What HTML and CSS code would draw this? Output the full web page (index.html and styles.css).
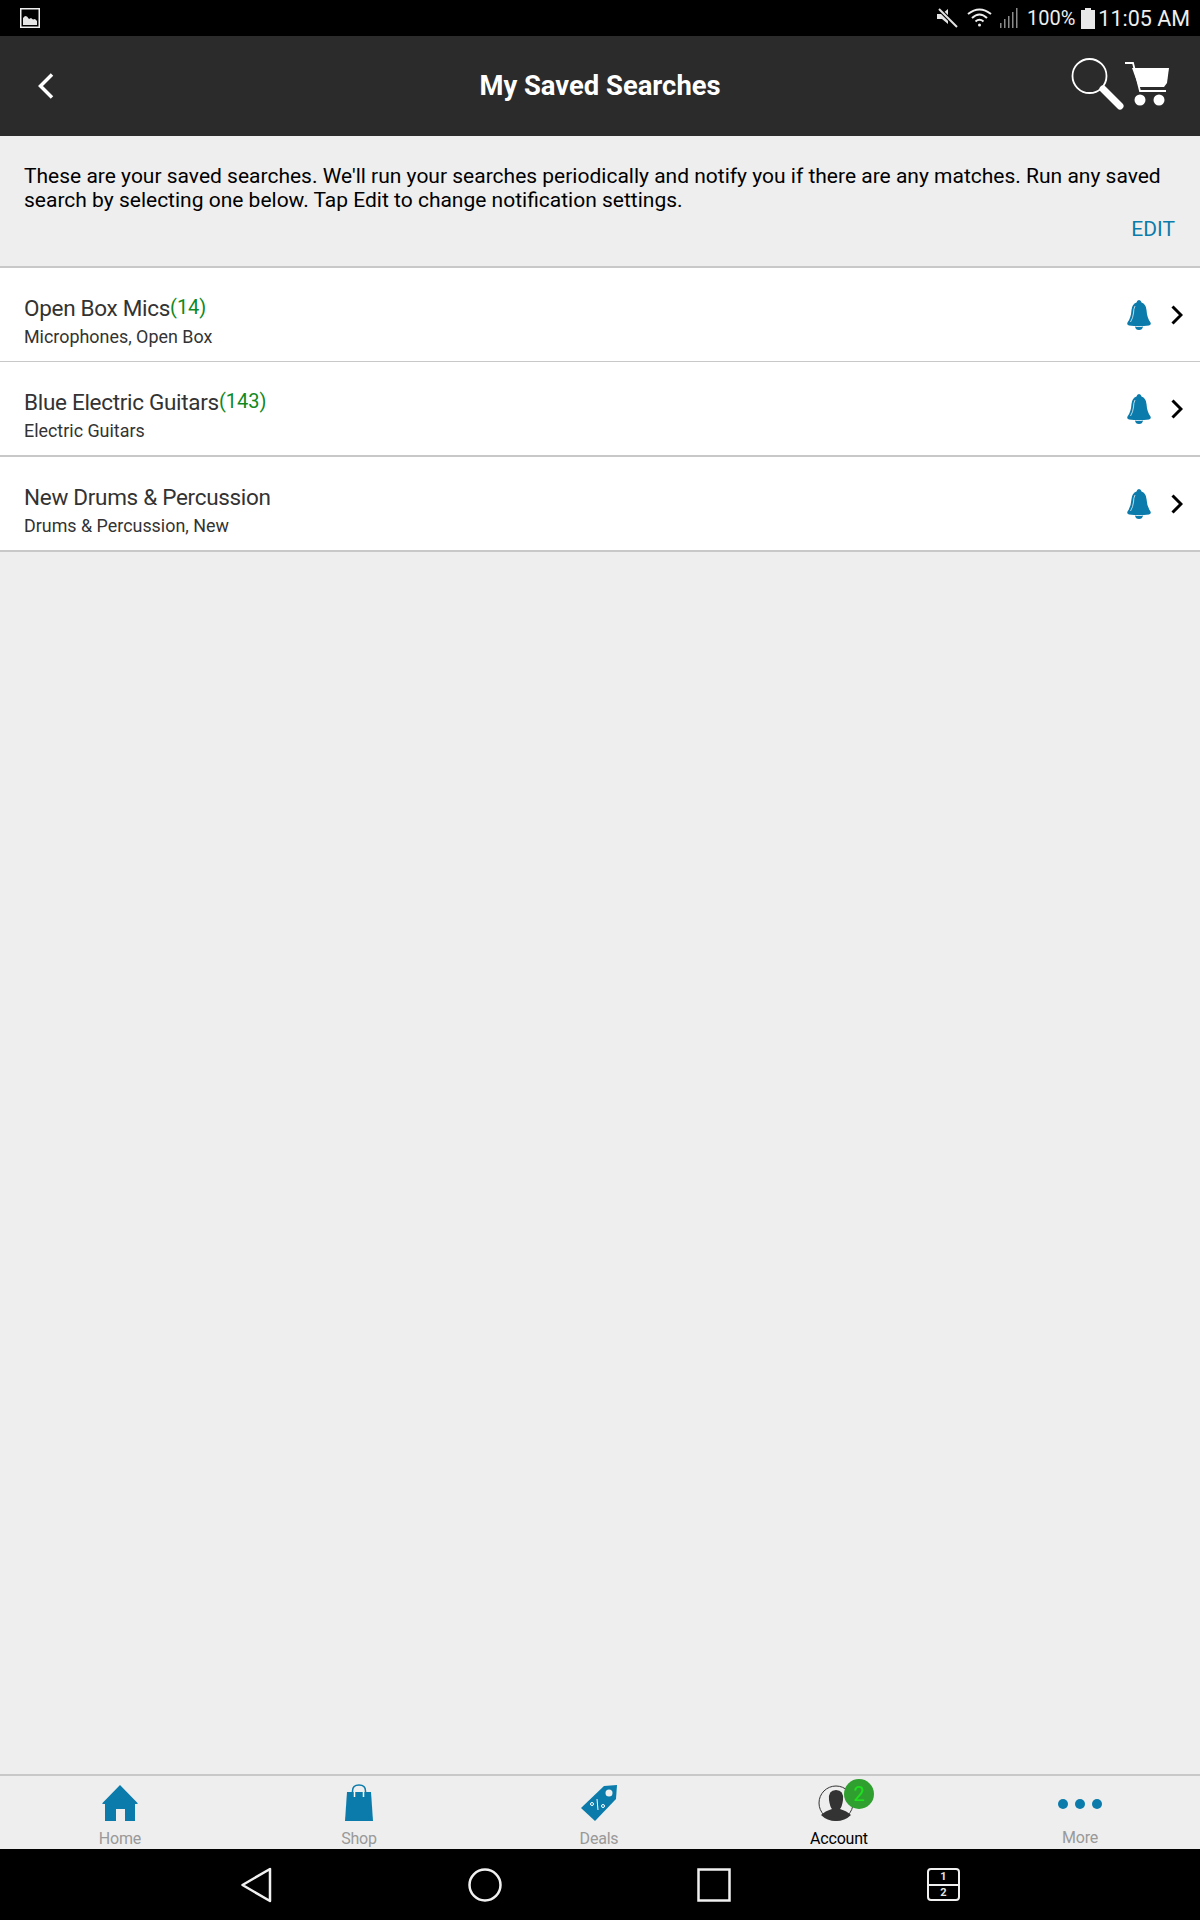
FILE: index.html
```html
<!DOCTYPE html>
<html lang="en">
<head>
  <meta charset="UTF-8" />
  <title>My Saved Searches</title>
  <link rel="stylesheet" href="styles.css">
</head>
<body>
  <div class="screen">
    <div class="status-bar">
      <svg class="status-photo" width="20" height="20" viewBox="0 0 20 20">
        <rect x="0.75" y="0.75" width="18.5" height="18.5" fill="none" stroke="#eee" stroke-width="1.5"/>
        <path d="M3 17V10L5 8L7 8.5L9 11L11 10L13 11.5L15 11L17 13V17Z" fill="#e4e4e4"/>
      </svg>
      <div class="status-right">
        <svg width="22" height="20" viewBox="0 0 22 20">
          <path d="M1 6H6L12 1V16L6 11H1Z" fill="#e4e4e4"/>
          <path d="M3 1L20 18" stroke="#000" stroke-width="4"/>
          <path d="M3 1L21 19" stroke="#e4e4e4" stroke-width="2"/>
        </svg>
        <svg class="status-wifi" width="25" height="20" viewBox="0 0 25 20" fill="none" stroke="#eee" stroke-width="2">
          <path d="M1 6Q12.5 -3 24 6"/>
          <path d="M5 10Q12.5 3 20 10"/>
          <path d="M8.500 13.500Q12.500 10 16.500 13.500"/>
          <circle cx="12.500" cy="17" r="1.500" fill="#eee" stroke="none"/>
        </svg>
        <svg class="status-signal" width="18" height="22" viewBox="0 0 18 22" fill="#8a8a8a">
          <rect x="0" y="16" width="1.500" height="5"/>
          <rect x="4" y="12" width="1.500" height="9"/>
          <rect x="8" y="9" width="1.500" height="12"/>
          <rect x="12" y="5" width="1.500" height="16"/>
          <rect x="16" y="1" width="1.500" height="20"/>
        </svg>
        <span class="status-pct">100%</span>
        <svg class="status-batt" width="14" height="21" viewBox="0 0 14 21">
          <path d="M4 0H10V2H14V21H0V2H4Z" fill="#e8e8e8"/>
        </svg>
        <span class="status-time">11:05 AM</span>
      </div>
    </div>

    <header class="app-bar">
      <svg class="back-icon" width="20" height="28" viewBox="0 0 20 28" fill="none" stroke="#fff" stroke-width="3.500">
        <path d="M16 2.500L4.500 14L16 25.500"/>
      </svg>
      <h1>My Saved Searches</h1>
      <div class="app-actions">
        <svg class="search-icon" width="54" height="54" viewBox="0 0 54 54" fill="none" stroke="#fff">
          <circle cx="18.500" cy="19" r="17" stroke-width="1.800"/>
          <path d="M32 32L49 49" stroke-width="7" stroke-linecap="round"/>
        </svg>
        <svg width="46" height="46" viewBox="0 0 46 46" fill="#fff">
          <path d="M1 2H9L16 30H42" fill="none" stroke="#fff" stroke-width="1.800"/>
          <path d="M8 7H45L43 22L40 26H15Z"/>
          <circle cx="16" cy="39" r="5.500"/>
          <circle cx="35" cy="39" r="5.500"/>
        </svg>
      </div>
    </header>

    <section class="intro">
      <p>These are your saved searches. We'll run your searches periodically and notify you if there are any matches. Run any saved search by selecting one below. Tap Edit to change notification settings.</p>
      <a class="edit-link">EDIT</a>
    </section>

    <ul class="search-list">
      <li class="search-row thin">
        <div class="search-text">
          <div class="search-name">Open Box Mics<span class="search-count">(14)</span></div>
          <div class="search-tags">Microphones, Open Box</div>
        </div>
        <svg class="bell" width="24" height="30" viewBox="0 0 24 30"><use href="#bell-shape"/></svg>
        <svg class="chevron" width="12" height="20" viewBox="0 0 12 20" fill="none" stroke="#000" stroke-width="3"><path d="M1.500 1.500L10 10L1.500 18.500"/></svg>
      </li>
      <li class="search-row">
        <div class="search-text">
          <div class="search-name">Blue Electric Guitars<span class="search-count">(143)</span></div>
          <div class="search-tags">Electric Guitars</div>
        </div>
        <svg class="bell" width="24" height="30" viewBox="0 0 24 30"><use href="#bell-shape"/></svg>
        <svg class="chevron" width="12" height="20" viewBox="0 0 12 20" fill="none" stroke="#000" stroke-width="3"><path d="M1.500 1.500L10 10L1.500 18.500"/></svg>
      </li>
      <li class="search-row">
        <div class="search-text">
          <div class="search-name">New Drums &amp; Percussion</div>
          <div class="search-tags">Drums &amp; Percussion, New</div>
        </div>
        <svg class="bell" width="24" height="30" viewBox="0 0 24 30"><use href="#bell-shape"/></svg>
        <svg class="chevron" width="12" height="20" viewBox="0 0 12 20" fill="none" stroke="#000" stroke-width="3"><path d="M1.500 1.500L10 10L1.500 18.500"/></svg>
      </li>
    </ul>

    <div class="spacer"></div>

    <nav class="tab-bar">
      <div class="tab">
        <svg width="38" height="38" viewBox="0 0 38 38" fill="#0a7bab">
          <path d="M19 1L37 19.500L35.500 20H34V37H24V25H15V37H4V20H2.500L1 19.500Z"/>
        </svg>
        <span>Home</span>
      </div>
      <div class="tab nudge">
        <svg width="28" height="38" viewBox="0 0 28 38">
          <path d="M2 8H26L28 37H0Z" fill="#0a7bab"/>
          <path d="M7.500 13V7Q7.500 1 14 1Q20.500 1 20.500 7V13" fill="none" stroke="#0a7bab" stroke-width="1.500"/>
          <path d="M9.500 13V8M18.500 13V8" stroke="#fff" stroke-width="1.500"/>
        </svg>
        <span>Shop</span>
      </div>
      <div class="tab nudge">
        <svg width="38" height="38" viewBox="0 0 38 38">
          <path d="M1 24L24 2L37 1L36 15L15 37Z" fill="#0a7bab"/>
          <circle cx="29" cy="9" r="3.500" fill="#eee"/>
          <path d="M17 15L18 26" stroke="#fff" stroke-width="1"/>
          <circle cx="12" cy="20" r="1.500" fill="none" stroke="#fff"/>
          <circle cx="23" cy="22" r="1.500" fill="none" stroke="#fff"/>
        </svg>
        <span>Deals</span>
      </div>
      <div class="tab nudge active">
        <div class="avatar">
          <svg width="36" height="38" viewBox="0 0 36 38">
            <circle cx="18" cy="19" r="17" fill="#eee" stroke="#333" stroke-width="1"/>
            <path d="M18 6Q26 6 25 16Q24 23 22 25Q29 27 33 31Q27 37 18 37Q9 37 3 31Q7 27 14 25Q12 23 11 16Q10 6 18 6Z" fill="#333"/>
          </svg>
          <span class="avatar-badge">2</span>
        </div>
        <span>Account</span>
      </div>
      <div class="tab more">
        <div class="more-dots"><i></i><i></i><i></i></div>
        <span>More</span>
      </div>
    </nav>

    <div class="nav-bar">
      <svg width="36" height="36" viewBox="0 0 36 36" fill="none" stroke="#f0f0f0" stroke-width="2.500">
        <path d="M4.500 18L32 2V34Z" stroke-linejoin="round"/>
      </svg>
      <svg width="36" height="36" viewBox="0 0 36 36" fill="none" stroke="#f0f0f0" stroke-width="2.500">
        <circle cx="18" cy="18" r="15.500"/>
      </svg>
      <svg width="36" height="36" viewBox="0 0 36 36" fill="none" stroke="#f0f0f0" stroke-width="2.500">
        <rect x="2.500" y="2.500" width="31" height="31"/>
      </svg>
      <div class="split-btn"><span>1</span><span>2</span></div>
    </div>
  </div>

  <svg class="defs" width="0" height="0">
    <symbol id="bell-shape" viewBox="0 0 24 30">
      <path d="M12 0Q14 0 14.500 2.500Q19 4 19.500 10Q20 18 23.500 22.500Q24.500 25 22 25.500Q12 27 2 25.500Q-0.500 25 0.500 22.500Q4 18 4.500 10Q5 4 9.500 2.500Q10 0 12 0Z" fill="#0a7bab"/>
      <path d="M8 26.500Q12 27.500 16 26.500Q15.500 30 12 30Q8.500 30 8 26.500Z" fill="#0a7bab"/>
      <path d="M8 6Q6.500 9 6.500 13Q6 18 3.500 22" fill="none" stroke="#eaf4f8" stroke-width="0.800"/>
    </symbol>
  </svg>
</body>
</html>
```

FILE: styles.css
```css
* { box-sizing:border-box; margin:0; padding:0; }
body {
  font-family:Roboto,"Liberation Sans",sans-serif;
  background:#eee;
}
.screen {
  width:1200px; height:1920px;
  display:flex; flex-direction:column;
}
.defs { position:absolute; }

/* status bar */
.status-bar {
  height:36px; flex:none;
  background:#000; color:#eee;
  display:flex; align-items:center;
  justify-content:space-between;
  padding:0 10px 0 20px;
}
.status-right { display:flex; align-items:center; }
.status-wifi { margin-left:9px; }
.status-signal { margin-left:8px; }
.status-pct { font-size:20px; margin-left:9px; }
.status-batt { margin-left:6px; }
.status-time { font-size:21.5px; margin-left:3px; }

/* app bar */
.app-bar {
  height:100px; flex:none;
  background:#2b2b2b; color:#fff;
  display:flex; align-items:center;
  position:relative;
  padding:0 30px 0 36px;
}
.app-bar h1 {
  position:absolute; left:0; right:0;
  text-align:center;
  font-size:27.4px; font-weight:700;
}
.app-actions {
  margin-left:auto;
  margin-top:-4px;
  display:flex; align-items:center;
}
.search-icon { margin-right:-1px; }

/* intro text */
.intro {
  height:132px; flex:none;
  padding:28px 24px 0;
  font-size:21px; line-height:24px;
  color:#000;
  border-bottom:2px solid #c8c8c8;
  display:flex; flex-direction:column;
}
.edit-link {
  align-self:flex-end;
  margin-top:5px; margin-right:1px;
  font-size:21px; color:#0a7bab;
}

/* saved searches */
.search-list { list-style:none; background:#fff; flex:none; }
.search-row {
  height:95px;
  display:flex; align-items:center;
  padding:0 17px 0 24px;
  border-bottom:2px solid #c8c8c8;
}
.search-row.thin { height:94px; border-bottom-width:1px; }
.search-text { flex:1; padding-top:13px; }
.search-name { font-size:22.5px; line-height:28px; color:#333; letter-spacing:-0.3px; }
.search-count { font-size:20px; color:#0f8a1e; vertical-align:2px; letter-spacing:0; }
.search-tags { font-size:17.9px; line-height:24px; color:#333; margin-top:3px; }
.bell { margin-right:20px; }
.chevron { flex:none; }
.spacer { flex:1; }

/* bottom tabs */
.tab-bar {
  height:75px; flex:none;
  background:#eee;
  border-top:2px solid #c8c8c8;
  display:grid; grid-template-columns:repeat(5,1fr);
}
.tab {
  display:flex; flex-direction:column;
  align-items:center;
  padding-top:8px;
  color:#999; font-size:16px; line-height:20px;
}
.tab.nudge { padding-right:2px; }
.tab span { margin-top:7px; letter-spacing:-0.2px; }
.tab.active { color:#000; }
.avatar { position:relative; height:38px; margin-left:-6px; }
.avatar svg { display:block; }
.tab .avatar-badge {
  position:absolute; left:26px; top:-5px;
  margin:0; width:30px; height:30px;
  border-radius:50%;
  background:#2fa02f; color:#1ee01e;
  font-size:20px; line-height:30px;
  text-align:center;
}
.more-dots {
  height:38px; padding-top:2px;
  display:flex; align-items:center; gap:7px;
}
.more-dots i {
  display:block; width:10px; height:10px;
  border-radius:50%; background:#0a7bab;
}
.tab.more span { margin-top:6px; }

/* android nav */
.nav-bar {
  height:71px; flex:none;
  background:#000;
  display:flex; align-items:center;
  gap:193px;
  padding-left:238px;
}
.split-btn {
  width:33px; height:33px;
  margin-left:2px;
  border:2.500px solid #f0f0f0; border-radius:4px;
  display:flex; flex-direction:column;
  color:#e4e4e4; font-size:11px; font-weight:700;
  text-align:center; line-height:14px;
}
.split-btn span:first-child { border-bottom:2.500px solid #f0f0f0; }
```
